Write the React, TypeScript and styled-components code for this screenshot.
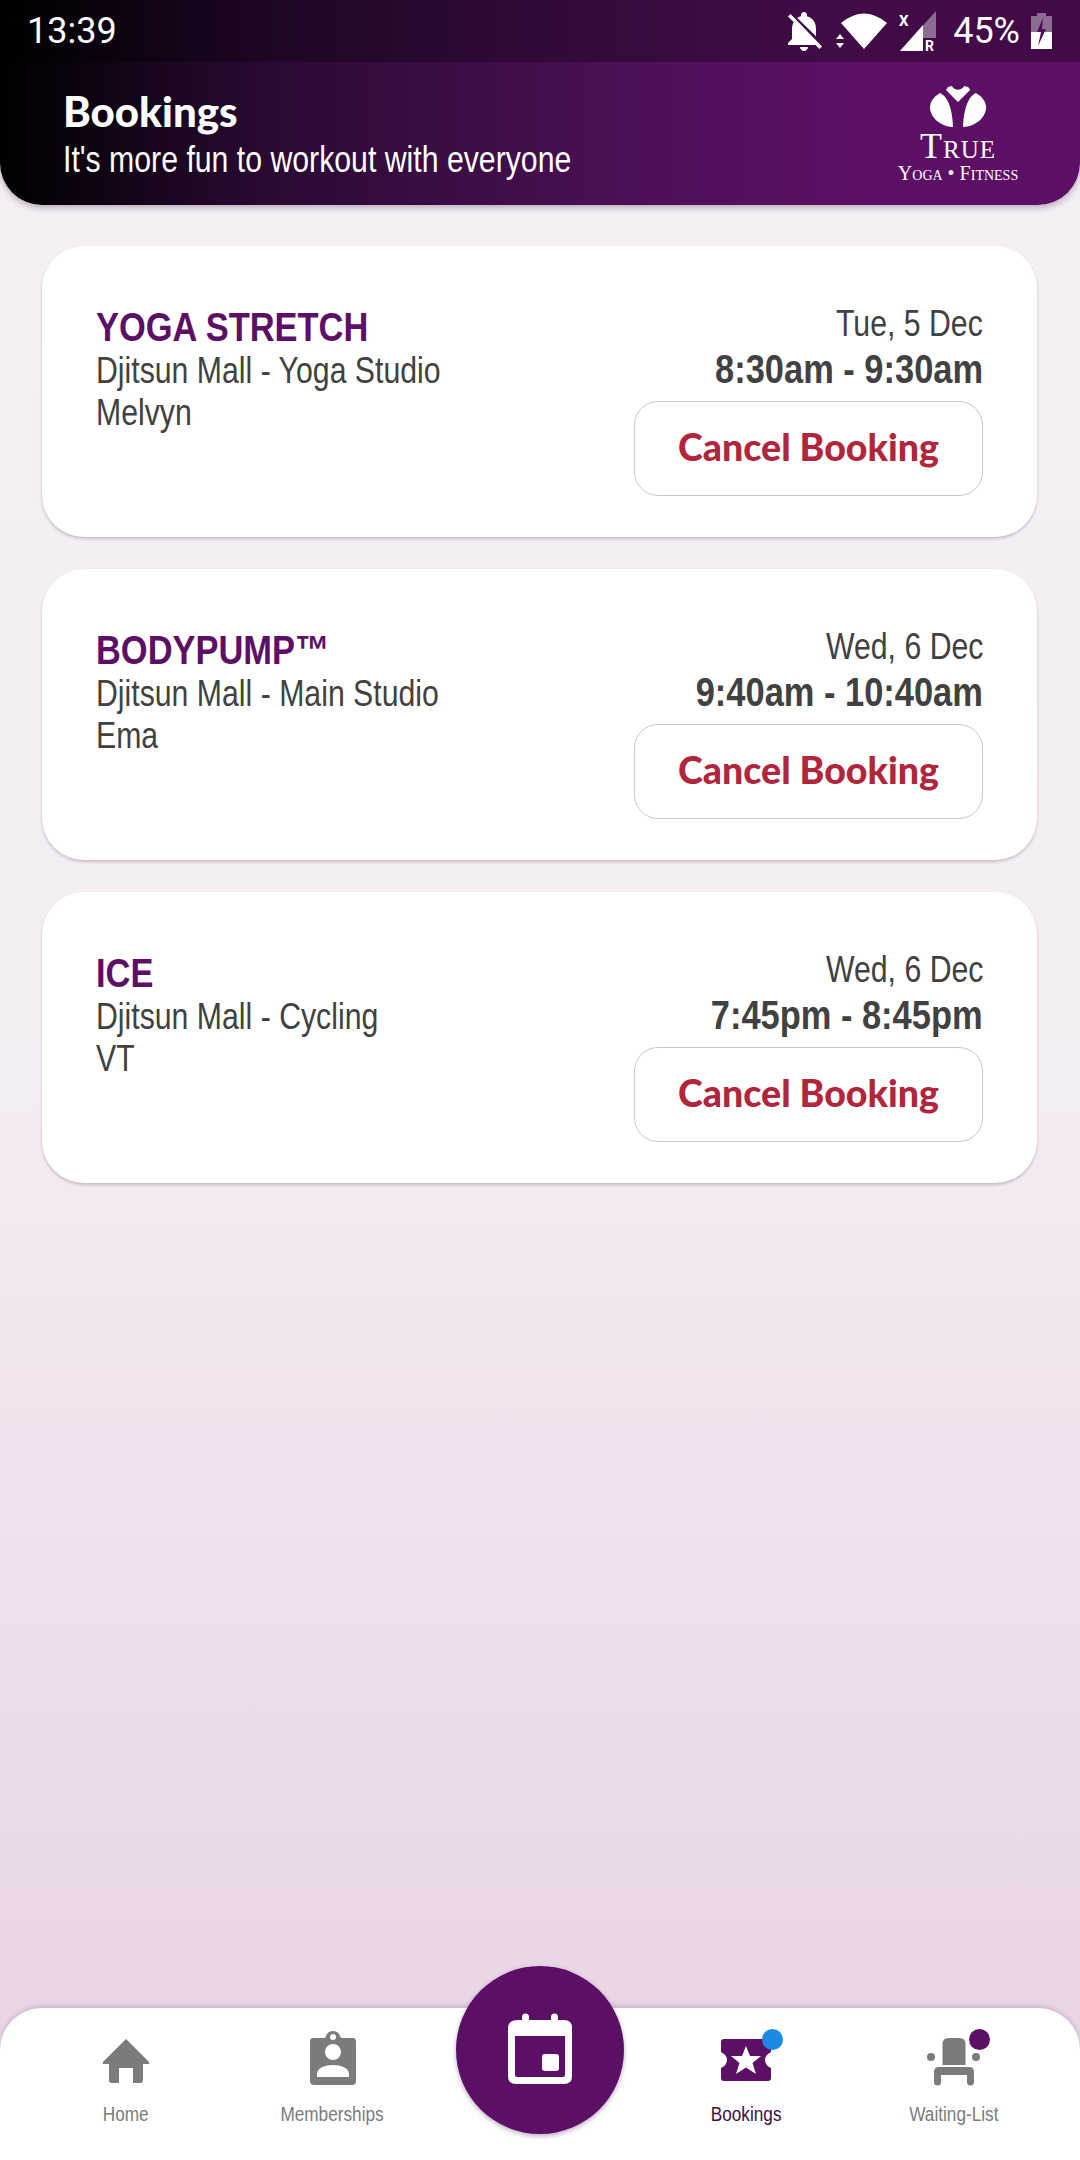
import React from "react";
import styled, { createGlobalStyle } from "styled-components";

const Global = createGlobalStyle`
  html, body { margin: 0; padding: 0; }
  body { font-family: "Liberation Sans", Arial, sans-serif; }
`;

const Page = styled.div`
  width: 1080px;
  height: 2160px;
  display: flex;
  flex-direction: column;
  overflow: hidden;
  background: linear-gradient(180deg, #f4f0f3 0%, #f4eef3 48%, #f1e4ef 65%, #ebdae9 85%, #e6d2e3 100%);
`;

const Squeezed = styled.span<{ $origin?: string; $ratio?: number }>`
  display: inline-block;
  white-space: nowrap;
  font-family: "Liberation Sans", sans-serif;
  transform: scaleX(${(p) => p.$ratio ?? 0.84});
  transform-origin: ${(p) => p.$origin ?? "left"} center;
`;

const Header = styled.header`
  height: 205px;
  flex: none;
  display: flex;
  flex-direction: column;
  border-radius: 0 0 42px 42px;
  background: linear-gradient(90deg, #000 0%, #2a0a33 25%, #4f1059 62%, #5c1065 80%, #5c1065 100%);
  box-shadow: 0 3px 6px rgba(60, 20, 70, 0.3);
`;

const StatusBar = styled.div`
  height: 62px;
  flex: none;
  display: flex;
  align-items: center;
  justify-content: space-between;
  padding: 0 28px 0 27px;
  background: rgba(0, 0, 0, 0.28);
  color: #fff;
  font-family: Roboto, sans-serif;
`;

const Clock = styled.span`
  font-size: 36px;
`;

const StatusIcons = styled.div`
  display: flex;
  align-items: center;
`;

const Percent = styled.span`
  font-size: 36px;
  margin: 0 11px 0 16px;
`;

const StatusSvg = styled.svg<{ $gap?: number }>`
  overflow: visible;
  margin-left: ${(p) => p.$gap ?? 0}px;
`;

const HeaderBody = styled.div`
  flex: 1;
  display: flex;
  align-items: flex-start;
  justify-content: space-between;
  padding: 0 62px 0 63px;
`;

const HeaderText = styled.div`
  padding-top: 26px;
  color: #fff;
`;

const PageTitle = styled.div`
  font-family: Lato, sans-serif;
  font-weight: 900;
  font-size: 42px;
  line-height: 46px;
`;

const Tagline = styled.div`
  font-size: 36px;
  line-height: 46px;
  margin-top: 3px;
`;

const Logo = styled.div`
  width: 120px;
  display: flex;
  flex-direction: column;
  align-items: center;
  color: #fff;
  font-family: "Liberation Serif", serif;
  padding-top: 24px;
`;

const LogoMain = styled.div`
  font-size: 36px;
  line-height: 30px;
  margin-top: 3px;
  font-variant: small-caps;
  letter-spacing: 1px;
`;

const LogoSub = styled.div`
  font-size: 20px;
  line-height: 24px;
  font-variant: small-caps;
  white-space: nowrap;
`;

const List = styled.main`
  flex: 1;
  display: flex;
  flex-direction: column;
  gap: 32px;
  padding: 41px 43px 0 42px;
`;

const Card = styled.article`
  height: 291px;
  box-sizing: border-box;
  display: flex;
  justify-content: space-between;
  padding: 58px 54px 0;
  background: #fff;
  border-radius: 42px;
  box-shadow: 0 2px 3px rgba(70, 50, 70, 0.25);
`;

const Info = styled.div`
  color: #414141;
  font-size: 36px;
  line-height: 42px;
`;

const ClassName = styled.div`
  color: #5c1065;
  font-weight: 700;
  font-size: 41px;
  line-height: 46px;
`;

const When = styled.div`
  display: flex;
  flex-direction: column;
  align-items: flex-end;
  color: #414141;
`;

const DateText = styled.div`
  font-size: 36px;
  line-height: 40px;
`;

const TimeText = styled.div`
  font-size: 41px;
  line-height: 50px;
  font-weight: 700;
`;

const CancelButton = styled.button`
  width: 349px;
  height: 95px;
  margin-top: 7px;
  box-sizing: border-box;
  background: #fff;
  border: 1.5px solid #c9c9c9;
  border-radius: 24px;
  color: #b1263c;
  font-family: Lato, sans-serif;
  font-weight: 900;
  font-size: 37.5px;
  padding: 0 0 5px;
`;

const Nav = styled.nav`
  position: relative;
  height: 152px;
  flex: none;
  box-sizing: border-box;
  padding: 0 23px 0 22px;
  display: grid;
  grid-template-columns: repeat(5, 1fr);
  background: #fff;
  border-radius: 42px 42px 0 0;
  box-shadow: 0 -2px 5px rgba(110, 50, 110, 0.2);
`;

const NavItem = styled.div<{ $active?: boolean }>`
  display: flex;
  flex-direction: column;
  align-items: center;
  font-size: 20px;
  line-height: 24px;
  color: ${(p) => (p.$active ? "#3f0c47" : "#7b7b7b")};
`;

const IconSlot = styled.div`
  position: relative;
  width: 60px;
  height: 60px;
  margin: 24px 0 10px;
`;

const Dot = styled.span<{ $color: string }>`
  position: absolute;
  top: -3px;
  right: -6px;
  width: 21px;
  height: 21px;
  border-radius: 50%;
  background: ${(p) => p.$color};
`;

const Fab = styled.div`
  position: absolute;
  left: 456px;
  top: -42px;
  width: 168px;
  height: 168px;
  border-radius: 50%;
  background: #5c1065;
  box-shadow: 0 2px 5px rgba(70, 20, 80, 0.35);
  display: flex;
  align-items: center;
  justify-content: center;
`;

const bookings = [
  { name: "YOGA STRETCH", place: "Djitsun Mall - Yoga Studio", who: "Melvyn", date: "Tue, 5 Dec", time: "8:30am - 9:30am" },
  { name: "BODYPUMP™", place: "Djitsun Mall - Main Studio", who: "Ema", date: "Wed, 6 Dec", time: "9:40am - 10:40am" },
  { name: "ICE", place: "Djitsun Mall - Cycling", who: "VT", date: "Wed, 6 Dec", time: "7:45pm - 8:45pm" },
];

const BellOff = () => (
  <StatusSvg width="48" height="48" viewBox="0 0 24 24" fill="#fff">
    <path d="M20 18.69L7.84 6.14 5.27 3.49 4 4.76l2.8 2.8v.01c-.52.99-.8 2.16-.8 3.42v5l-2 2v1h13.73l2 2L21 19.72l-1-1.03zM12 22c1.11 0 2-.89 2-2h-4c0 1.11.89 2 2 2zm6-7.32V11c0-3.08-1.64-5.64-4.5-6.32V4c0-.83-.67-1.5-1.5-1.5s-1.5.67-1.5 1.5v.68c-.15.03-.29.08-.42.12-.1.03-.2.07-.3.11h-.01c-.2.08-.4.17-.59.27-.2.1-.39.21-.57.33L18 14.68z" />
  </StatusSvg>
);

const Wifi = () => (
  <StatusSvg $gap={8} width="52" height="40" viewBox="0 0 52 40" fill="#fff">
    <path d="M5 12 Q28 -7 51 12 L28 38 Z" />
    <path d="M0 28 L4 23 L8 28 Z M0 32 L8 32 L4 37 Z" />
  </StatusSvg>
);

const Signal = () => (
  <StatusSvg $gap={11} width="38" height="42" viewBox="0 0 38 42">
    <path d="M37 1 L37 28 L24 28 L24 41 L1 41 Z" fill="#fff" opacity="0.4" />
    <path d="M24 15 L24 41 L1 41 Z" fill="#fff" />
    <text x="0" y="16" fontSize="15" fontWeight="700" fill="#fff" fontFamily="Roboto">X</text>
    <text x="26" y="41" fontSize="14" fontWeight="700" fill="#fff" fontFamily="Roboto">R</text>
  </StatusSvg>
);

const Battery = () => (
  <StatusSvg width="21" height="37" viewBox="0 0 21 37">
    <path d="M6 0 H15 V3 H21 V19 H0 V3 H6 Z" fill="#fff" opacity="0.4" />
    <path d="M0 19 H21 V36 H0 Z" fill="#fff" />
    <path d="M12 5 L6 19 H10 L7 33 L15 16 H11 Z" fill="#4a1052" />
  </StatusSvg>
);

const LogoMark = () => (
  <svg width="58" height="42" viewBox="0 0 58 42" fill="#fff">
    <path d="M19 1 L23 0 C25 5 33 5 35 0 L39 1 C40 2 41 3 41 4 L29 16 L17 4 Z" />
    <path d="M11 7 C17 10 23 18 24 41 C8 40 0 28 1 20 C2 14 6 10 11 7 Z" />
    <path d="M47 7 C41 10 35 18 34 41 C50 40 58 28 57 20 C56 14 52 10 47 7 Z" />
  </svg>
);

const HomeIcon = () => (
  <svg width="60" height="60" viewBox="0 0 60 60" fill="#7b7b7b">
    <path d="M30 7 L53 30 Q54 32 52 32 H47 V48 Q47 51 44 51 H37 V36 H23 V51 H16 Q13 51 13 48 V32 H8 Q6 32 7 30 Z" />
  </svg>
);

const BadgeIcon = () => (
  <svg width="60" height="60" viewBox="0 0 60 60" overflow="visible">
    <path d="M10 6 H22 Q24 -1 30 -1 Q36 -1 38 6 H50 Q53 6 53 10 V49 Q53 53 49 53 H11 Q7 53 7 49 V10 Q7 6 10 6 Z M30 2 A3 3 0 1 0 30.01 8 A3 3 0 1 0 30 2 Z M30 12 A8 8 0 1 0 30.01 28 A8 8 0 1 0 30 12 Z M14 45 H46 V42 C46 36 38 33 30 33 C22 33 14 36 14 42 Z" fill="#7b7b7b" fillRule="evenodd" />
  </svg>
);

const TicketIcon = () => (
  <svg width="60" height="60" viewBox="0 0 60 60">
    <path d="M7 7 H51 Q54 7 54 10 V20 Q48 23 48 28 Q48 33 54 36 V46 Q54 49 51 49 H7 Q4 49 4 46 V36 Q10 33 10 28 Q10 23 4 20 V10 Q4 7 7 7 Z" fill="#5c1065" />
    <path d="M29 14 L33 24 H44 L35.5 31 L39 42 L29 35.5 L19 42 L22.5 31 L14 24 H25 Z" fill="#fff" />
  </svg>
);

const ChairIcon = () => (
  <svg width="60" height="60" viewBox="0 0 60 60" fill="#7b7b7b">
    <path d="M18.5 33 V12 Q18.5 6 24.5 6 H35.5 Q41.5 6 41.5 12 V33 Z" />
    <circle cx="7" cy="25" r="4" />
    <circle cx="52" cy="25" r="4" />
    <path d="M10 40 Q10 35 15 35 H45 Q50 35 50 40 V50 A3.5 3.5 0 0 1 43 50 V43 H17 V50 A3.5 3.5 0 0 1 10 50 Z" />
  </svg>
);

const CalendarIcon = () => (
  <svg width="68" height="72" viewBox="0 0 68 72" overflow="visible">
    <path d="M12 6 H16 V3 A3.5 3.5 0 0 1 23 3 V6 H45 V3 A3.5 3.5 0 0 1 52 3 V6 H58 Q66 6 66 14 V62 Q66 70 58 70 H10 Q2 70 2 62 V14 Q2 6 12 6 Z M9 22 V61 Q9 63 11 63 H57 Q59 63 59 61 V22 Z" fill="#fff" fillRule="evenodd" />
    <rect x="36" y="40" width="17" height="17" rx="3" fill="#fff" />
  </svg>
);

export default function App() {
  return (
    <Page>
      <Global />
      <Header>
        <StatusBar>
          <Clock>13:39</Clock>
          <StatusIcons>
            <BellOff />
            <Wifi />
            <Signal />
            <Percent>45%</Percent>
            <Battery />
          </StatusIcons>
        </StatusBar>
        <HeaderBody>
          <HeaderText>
            <PageTitle>Bookings</PageTitle>
            <Tagline><Squeezed>It's more fun to workout with everyone</Squeezed></Tagline>
          </HeaderText>
          <Logo>
            <LogoMark />
            <LogoMain>True</LogoMain>
            <LogoSub>Yoga • Fitness</LogoSub>
          </Logo>
        </HeaderBody>
      </Header>
      <List>
        {bookings.map((b) => (
          <Card key={b.name}>
            <Info>
              <ClassName><Squeezed>{b.name}</Squeezed></ClassName>
              <div><Squeezed>{b.place}</Squeezed></div>
              <div><Squeezed>{b.who}</Squeezed></div>
            </Info>
            <When>
              <DateText><Squeezed $origin="right">{b.date}</Squeezed></DateText>
              <TimeText><Squeezed $origin="right">{b.time}</Squeezed></TimeText>
              <CancelButton>Cancel Booking</CancelButton>
            </When>
          </Card>
        ))}
      </List>
      <Nav>
        <NavItem>
          <IconSlot><HomeIcon /></IconSlot>
          <Squeezed $origin="center" $ratio={0.86}>Home</Squeezed>
        </NavItem>
        <NavItem>
          <IconSlot><BadgeIcon /></IconSlot>
          <Squeezed $origin="center" $ratio={0.86}>Memberships</Squeezed>
        </NavItem>
        <div />
        <NavItem $active>
          <IconSlot><TicketIcon /><Dot $color="#1e88e5" /></IconSlot>
          <Squeezed $origin="center" $ratio={0.86}>Bookings</Squeezed>
        </NavItem>
        <NavItem>
          <IconSlot><ChairIcon /><Dot $color="#5c1065" /></IconSlot>
          <Squeezed $origin="center" $ratio={0.86}>Waiting-List</Squeezed>
        </NavItem>
        <Fab><CalendarIcon /></Fab>
      </Nav>
    </Page>
  );
}
